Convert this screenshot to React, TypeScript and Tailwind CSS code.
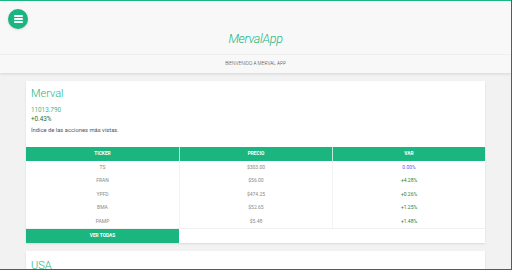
const rows = [
  { ticker: 'TS', price: '$303.00', change: '0.00%' },
  { ticker: 'FRAN', price: '$56.00', change: '+4.28%' },
  { ticker: 'YPFD', price: '$474.25', change: '+0.26%' },
  { ticker: 'BMA', price: '$52.65', change: '+1.25%' },
  { ticker: 'PAMP', price: '$5.48', change: '+1.48%' },
];

function MenuButton() {
  return (
    <button className="w-[20px] h-[20px] rounded-full bg-[#1bb580] flex flex-col items-center justify-center gap-[1.6px] shadow-sm">
      <span className="block w-[9px] h-[1.8px] rounded-full bg-white" />
      <span className="block w-[9px] h-[1.8px] rounded-full bg-white" />
      <span className="block w-[9px] h-[1.8px] rounded-full bg-white" />
    </button>
  );
}

export default function App() {
  return (
    <div
      className="h-[270px] overflow-hidden bg-[#f2f2f2] border-r border-b border-[#5a5a5a]"
      style={{ fontFamily: 'Roboto, "Liberation Sans", sans-serif' }}
    >
      {/* Header */}
      <header className="bg-[#f8f8f8] border-t-[1.5px] border-[#1bb580] shadow-[0_1px_3px_rgba(0,0,0,0.12)]">
        <div className="pl-[8px] pt-[8px]">
          <MenuButton />
        </div>
        <div className="mt-[2px] text-center text-[12.5px] leading-[16px] font-light italic text-[#1bb580] tracking-[-0.3px] mb-[7px]">
          MervalApp
        </div>
        <div className="border-t border-[#efefef] h-[19px] flex items-center justify-center text-[4.8px] font-light text-[#444]">
          BIENVENIDO A MERVAL APP
        </div>
      </header>

      {/* Merval card */}
      <section className="mx-[26px] mt-[8px] bg-white shadow-[0_1px_2px_rgba(0,0,0,0.1)]">
        <div className="px-[5px] pt-[6px] pb-[12px]">
          <h2 className="text-[11px] leading-[14px] font-light text-[#1bb580]">Merval</h2>
          <div className="mt-[5px] text-[6.3px] leading-[9px] text-[#3cb883]">11013.790</div>
          <div className="text-[6.3px] leading-[9px] text-[#2e6e2e]">+0.43%</div>
          <p className="mt-[2px] text-[5.8px] leading-[9px] text-[#555]">
            Índice de las acciones más vistas.
          </p>
        </div>

        <div className="grid grid-cols-3 h-[13.5px] bg-[#1bb580] text-white font-bold text-[4.8px]">
          <div className="flex items-center justify-center">TICKER</div>
          <div className="flex items-center justify-center border-l border-[#bfe9d9]">PRECIO</div>
          <div className="flex items-center justify-center border-l border-[#bfe9d9]">VAR</div>
        </div>
        <div className="border-b border-[#f0f0f0]">
          {rows.map((r) => (
            <div key={r.ticker} className="grid grid-cols-3 h-[13.5px] text-[5px]">
              <div className="flex items-center justify-center text-[#8a8a8a]">{r.ticker}</div>
              <div className="flex items-center justify-center text-[#8a8a8a] border-l border-[#f3f3f3]">
                {r.price}
              </div>
              <div
                className={
                  r.change === '0.00%'
                    ? 'flex items-center justify-center border-l border-[#f3f3f3] text-[#5b5bf5]'
                    : 'flex items-center justify-center border-l border-[#f3f3f3] text-[#2e7d32]'
                }
              >
                {r.change}
              </div>
            </div>
          ))}
        </div>
        <div className="grid grid-cols-3 h-[14px]">
          <button className="bg-[#1bb580] text-white font-bold text-[4.8px] flex items-center justify-center">
            VER TODAS
          </button>
        </div>
      </section>

      {/* USA card */}
      <section className="mx-[26px] mt-[8px] bg-white shadow-[0_1px_2px_rgba(0,0,0,0.1)]">
        <div className="px-[5px] pt-[8px] pb-[20px]">
          <h2 className="text-[11px] leading-[14px] font-light text-[#1bb580]">USA</h2>
        </div>
      </section>
    </div>
  );
}
